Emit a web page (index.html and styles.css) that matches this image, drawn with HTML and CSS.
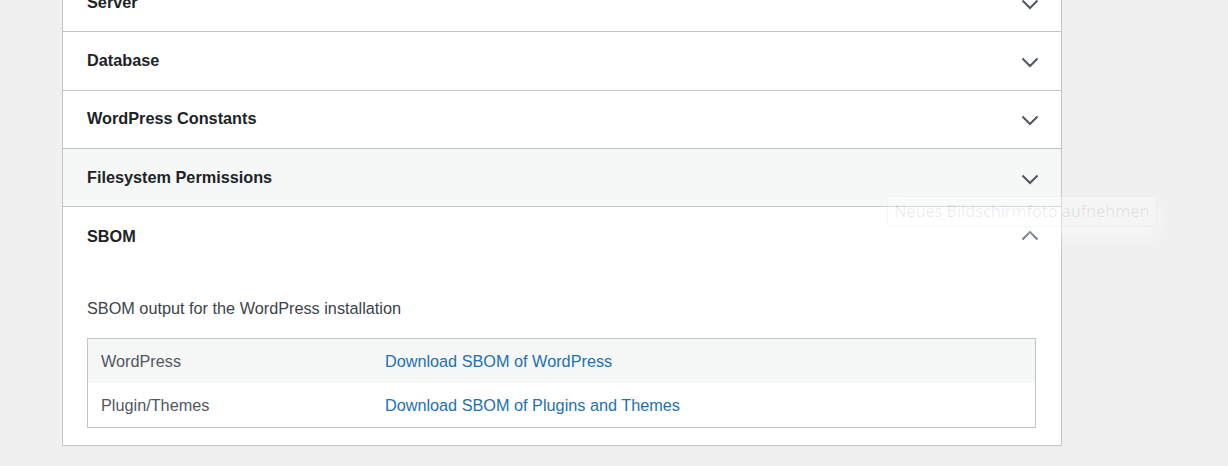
FILE: index.html
```html
<!DOCTYPE html>
<html lang="en">
<head>
<meta charset="utf-8">
<title>Site Health Info</title>
<link rel="stylesheet" href="styles.css">
</head>
<body>
<div class="wrap">
  <div class="accordion">
    <div class="item">
      <div class="trigger"><span class="title">Server</span><svg class="chev" viewBox="0 0 18 11" width="18" height="11"><polyline points="1.5,1.5 9,9 16.5,1.5"/></svg></div>
    </div>
    <div class="item">
      <div class="trigger"><span class="title">Database</span><svg class="chev" viewBox="0 0 18 11" width="18" height="11"><polyline points="1.5,1.5 9,9 16.5,1.5"/></svg></div>
    </div>
    <div class="item">
      <div class="trigger"><span class="title">WordPress Constants</span><svg class="chev" viewBox="0 0 18 11" width="18" height="11"><polyline points="1.5,1.5 9,9 16.5,1.5"/></svg></div>
    </div>
    <div class="item">
      <div class="trigger hover"><span class="title">Filesystem Permissions</span><svg class="chev" viewBox="0 0 18 11" width="18" height="11"><polyline points="1.5,1.5 9,9 16.5,1.5"/></svg></div>
    </div>
    <div class="item">
      <div class="trigger open"><span class="title">SBOM</span><svg class="chev up" viewBox="0 0 18 11" width="18" height="11"><polyline points="1.5,9.5 9,2 16.5,9.5"/></svg></div>
      <div class="panel">
        <p class="desc">SBOM output for the WordPress installation</p>
        <table class="info">
          <tbody>
            <tr class="alt"><td class="label">WordPress</td><td><a href="#" class="link">Download SBOM of WordPress</a></td></tr>
            <tr class="last"><td class="label">Plugin/Themes</td><td><a href="#" class="link">Download SBOM of Plugins and Themes</a></td></tr>
          </tbody>
        </table>
      </div>
    </div>
  </div>
</div>
<div class="tooltip">Neues Bildschirmfoto aufnehmen</div>
</body>
</html>
```
FILE: styles.css
```css
html, body {
  margin: 0;
  padding: 0;
}
body {
  background: #f0f0f1;
  font-family: "Liberation Sans", Arial, sans-serif;
  font-size: 16.25px;
  color: #3c434a;
  height: 466px;
  overflow: hidden;
  position: relative;
}
.wrap {
  margin-top: -27px;
  padding-left: 62px;
}
.accordion {
  box-sizing: border-box;
  width: 1000px;
  background: #fff;
  border: 1px solid #c3c4c7;
}
.item + .item {
  border-top: 1px solid #c3c4c7;
}
.trigger {
  display: flex;
  align-items: center;
  justify-content: space-between;
  height: 57.33px;
  padding: 0 22px 0 24px;
  box-sizing: border-box;
}
.trigger.hover {
  background: #f6f7f7;
}
.title {
  font-weight: 700;
  color: #1d2327;
  line-height: 24px;
  margin-bottom: 2px;
}
.trigger.open .title {
  margin-bottom: 0;
}
.chev {
  display: block;
  margin-top: 3px;
}
.chev.up {
  margin-top: -1px;
}
.chev polyline {
  fill: none;
  stroke: #50575e;
  stroke-width: 2;
}
.panel {
  padding: 31px 25px 17px 24px;
}
.desc {
  margin: 0 0 18px;
  line-height: 24px;
  color: #3c434a;
}
.info {
  width: 100%;
  border-collapse: collapse;
  border: 1px solid #c3c4c7;
}
.info td {
  height: 44px;
  padding: 0 13px;
  line-height: 24px;
  color: #50575e;
}
.info td.label {
  width: 30%;
}
.info tr.alt td {
  background: #f6f7f7;
}
.link {
  color: #2271b1;
  text-decoration: none;
}
.tooltip {
  position: absolute;
  left: 887px;
  top: 196px;
  width: 270px;
  height: 31px;
  box-sizing: border-box;
  border: 1px solid rgba(0, 0, 0, 0.03);
  border-radius: 3px;
  background: rgba(255, 255, 255, 0.35);
  box-shadow: 0 8px 20px rgba(255, 255, 255, 0.6);
  color: rgba(0, 0, 0, 0.09);
  font-family: "Open Sans", "Noto Sans", sans-serif;
  font-size: 16.3px;
  line-height: 29px;
  padding-left: 6px;
  white-space: nowrap;
}
```
